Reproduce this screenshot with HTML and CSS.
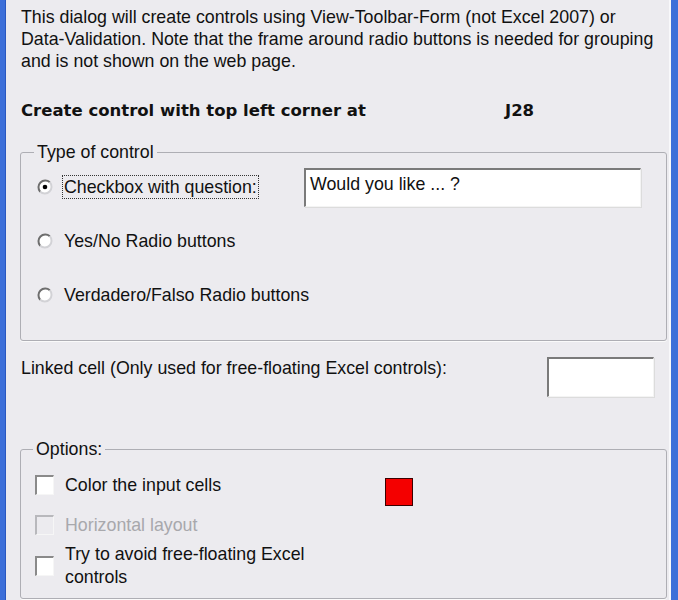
FILE: index.html
```html
<!DOCTYPE html>
<html lang="en">
<head>
    <meta charset="UTF-8">
    <title>Create Controls</title>
    <link rel="stylesheet" href="styles.css">
</head>
<body>
    <div class="window">
        <p class="intro">
            This dialog will create controls using View-Toolbar-Form (not Excel 2007) or<br>
            Data-Validation. Note that the frame around radio buttons is needed for grouping<br>
            and is not shown on the web page.
        </p>

        <div class="anchor-row">
            <span>Create control with top left corner at</span>
            <span>J28</span>
        </div>

        <fieldset class="group type-group">
            <legend>Type of control</legend>
            <div class="option-row">
                <svg class="radio" viewBox="0 0 16 16">
                    <circle cx="8" cy="8" r="6.8" fill="#fff"/>
                    <path d="M3.2 12.8 A6.8 6.8 0 0 1 12.8 3.2" fill="none" stroke="#6e6e6e" stroke-width="2"/>
                    <path d="M12.8 3.2 A6.8 6.8 0 0 1 3.2 12.8" fill="none" stroke="#d2d2d6" stroke-width="2"/>
                    <circle cx="8" cy="8" r="2.3" fill="#000"/>
                </svg>
                <span class="option-label focused">Checkbox with question:</span>
                <div class="textbox question">Would you like ... ?</div>
            </div>
            <div class="option-row">
                <svg class="radio" viewBox="0 0 16 16">
                    <circle cx="8" cy="8" r="6.8" fill="#fff"/>
                    <path d="M3.2 12.8 A6.8 6.8 0 0 1 12.8 3.2" fill="none" stroke="#6e6e6e" stroke-width="2"/>
                    <path d="M12.8 3.2 A6.8 6.8 0 0 1 3.2 12.8" fill="none" stroke="#d2d2d6" stroke-width="2"/>
                </svg>
                <span class="option-label">Yes/No Radio buttons</span>
            </div>
            <div class="option-row">
                <svg class="radio" viewBox="0 0 16 16">
                    <circle cx="8" cy="8" r="6.8" fill="#fff"/>
                    <path d="M3.2 12.8 A6.8 6.8 0 0 1 12.8 3.2" fill="none" stroke="#6e6e6e" stroke-width="2"/>
                    <path d="M12.8 3.2 A6.8 6.8 0 0 1 3.2 12.8" fill="none" stroke="#d2d2d6" stroke-width="2"/>
                </svg>
                <span class="option-label">Verdadero/Falso Radio buttons</span>
            </div>
        </fieldset>

        <div class="linked-row">
            <span class="linked-label">Linked cell (Only used for free-floating Excel controls):</span>
            <div class="textbox linked"></div>
        </div>

        <fieldset class="group options-group">
            <legend>Options:</legend>
            <div class="check-row">
                <span class="checkbox"></span>
                <span class="check-label">Color the input cells</span>
                <span class="swatch"></span>
            </div>
            <div class="check-row disabled">
                <span class="checkbox"></span>
                <span class="check-label">Horizontal layout</span>
            </div>
            <div class="check-row tall">
                <span class="checkbox"></span>
                <span class="check-label">Try to avoid free-floating Excel<br>controls</span>
            </div>
        </fieldset>
    </div>
</body>
</html>
```

FILE: styles.css
```css
* {
    margin: 0;
    padding: 0;
    box-sizing: border-box;
}

body {
    font-family: 'Liberation Sans', Arial, sans-serif;
    font-size: 17.8px;
    color: #111;
    background: #ecebef;
}

.window {
    width: 678px;
    height: 600px;
    overflow: hidden;
    padding: 6px 4px 0 15px;
    background: #ecebef;
    border-left: 5px solid #3d6fd9;
    border-right: 7px solid #3d6fd9;
    box-shadow: inset -2px 0 0 #f8f8fa, inset 1px 0 0 #2a58c0;
}

.intro {
    padding-left: 1px;
    line-height: 22px;
}

.anchor-row {
    display: grid;
    grid-template-columns: 484px auto;
    margin-top: 28px;
    padding-left: 1px;
    font-family: 'DejaVu Sans', Verdana, sans-serif;
    font-size: 16.5px;
    font-weight: bold;
    line-height: 22px;
}

.group {
    border: 1px solid #aeaeb4;
    border-radius: 3px;
    box-shadow: 0 1px 0 #fafafa;
}

.group legend {
    padding: 0 3px;
    line-height: 16px;
}

.type-group {
    margin-top: 22px;
    padding: 0 0 18px 16px;
}

.type-group legend {
    margin-left: -3px;
}

.option-row {
    display: flex;
    align-items: center;
    height: 54px;
}

.radio {
    width: 16px;
    height: 16px;
    flex-shrink: 0;
}

.option-label {
    margin-left: 9px;
    padding: 1px 1px;
    border: 1px dotted transparent;
    line-height: 20px;
}

.option-label.focused {
    border-color: #333;
}

.textbox {
    background: #fff;
    border-style: solid;
    border-width: 2px 1px 1px 2px;
    border-color: #7a7a7a #f4f4f4 #f4f4f4 #7a7a7a;
    box-shadow: 1px 1px 0 #dcdcdc;
}

.question {
    width: 337px;
    height: 39px;
    margin-left: auto;
    margin-right: 25px;
    padding: 3px 4px;
    line-height: 22px;
}

.linked-row {
    display: flex;
    justify-content: space-between;
    align-items: flex-start;
    margin-top: 16px;
    padding-right: 13px;
}

.linked-label {
    padding: 1px 0 0 1px;
    line-height: 20px;
}

.linked {
    width: 107px;
    height: 40px;
}

.options-group {
    margin-top: 44px;
    padding: 8px 0 11px 14px;
}

.options-group legend {
    margin-left: -2px;
}

.check-row {
    display: flex;
    align-items: center;
    height: 40px;
}

.check-row.tall {
    height: 42px;
}

.checkbox {
    width: 19px;
    height: 20px;
    flex-shrink: 0;
    background: #fff;
    border-style: solid;
    border-width: 2px 1px 1px 2px;
    border-color: #8a8a8a #f6f6f6 #f6f6f6 #8a8a8a;
}

.check-label {
    width: 320px;
    margin-left: 11px;
    line-height: 23px;
}

.disabled .checkbox {
    background: #ecebef;
    border-color: #b8b8bc #f6f6f6 #f6f6f6 #b8b8bc;
}

.disabled .check-label {
    color: #a8a8ac;
}

.swatch {
    width: 28px;
    height: 28px;
    margin-top: 14px;
    background: #f40000;
    border: 1px solid #3a0000;
}
```
